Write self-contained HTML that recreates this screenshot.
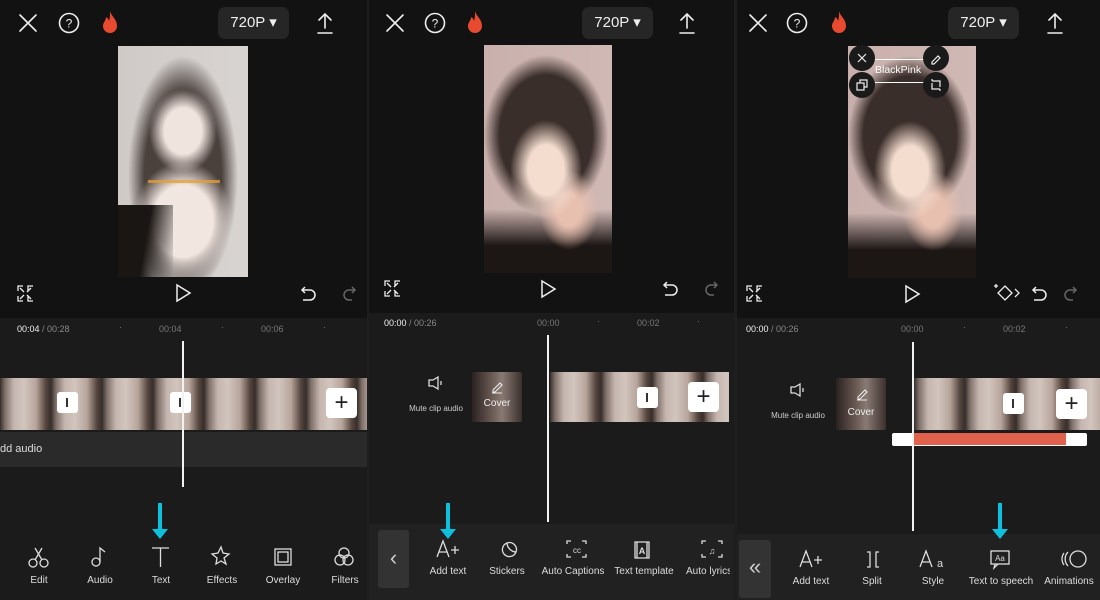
<!DOCTYPE html>
<html><head><meta charset="utf-8"><style>
*{margin:0;padding:0;box-sizing:border-box}
body{width:1100px;height:600px;background:#121212;position:relative;overflow:hidden;font-family:"Liberation Sans",sans-serif;color:#ddd}
.a{position:absolute}
.pill{position:absolute;height:32px;width:71px;background:#262626;border-radius:7px;color:#eee;font-size:15px;line-height:32px;text-align:center}
.tl{position:absolute;background:#1b1b1b}
.tb{position:absolute;background:#212121}
.time{position:absolute;font-size:9px;color:#888}
.time b{color:#eee;font-weight:normal}
.tick{position:absolute;font-size:9px;color:#777}
.ph{position:absolute;width:2px;background:#f2f2f2}
.clip{position:absolute;background:repeating-linear-gradient(90deg,#3a302c 0,#8a7a72 5px,#d8c8c0 14px,#e6d8d0 24px,#c8b4aa 36px,#5a4840 46px,#3a302c 51px)}
.mk{position:absolute;width:21px;height:21px;background:#fff;border-radius:3px}
.mk:after{content:"";position:absolute;left:9px;top:6px;width:2px;height:9px;background:#333}
.plus{position:absolute;width:31px;height:30px;background:#fff;border-radius:4px;color:#222;font-size:24px;line-height:29px;text-align:center}
.lbl{position:absolute;font-size:10px;color:#ddd;white-space:nowrap;transform:translateX(-50%)}
.arrow{position:absolute;width:4px;background:#0cc0de}
.arrow:after{content:"";position:absolute;left:-6px;bottom:-8px;border-left:8px solid transparent;border-right:8px solid transparent;border-top:10px solid #0cc0de}
.mute{position:absolute;font-size:8px;color:#ccc;transform:translateX(-50%);white-space:nowrap}
.cover{position:absolute;background:linear-gradient(90deg,#2a2220,#6a5a54 40%,#8a7a74 60%,#3a302c);border-radius:2px;color:#eee;font-size:10px;text-align:center}
.back{position:absolute;background:#333;border-radius:3px;color:#ccc;text-align:center}
.ph2{position:absolute;background:
 radial-gradient(ellipse 36px 50px at 62px 125px,#f4dccf 50%,rgba(240,210,195,0) 100%),
 radial-gradient(ellipse 30px 40px at 85px 165px,#e8c0b0 40%,rgba(0,0,0,0) 100%),
 linear-gradient(180deg,rgba(0,0,0,0) 72%,#1c1614 88%),
 radial-gradient(ellipse 62px 80px at 62px 90px,#3a2e2a 75%,rgba(0,0,0,0) 100%),
 linear-gradient(90deg,#c9b0ac,#d0b8b4)}
</style></head><body>

<div class="a" style="left:367px;top:0;width:2px;height:600px;background:#1e1e1e"></div>
<div class="a" style="left:734px;top:0;width:3px;height:600px;background:#1e1e1e"></div>

<!-- ============ PANEL 1 ============ -->
<svg class="a" style="left:0;top:0" width="367" height="45">
 <g stroke="#eee" stroke-width="1.6" fill="none" stroke-linecap="round">
  <path d="M20 15l16 16M36 15L20 31"/>
  <circle cx="69" cy="23" r="9.5"/>
  <path d="M325 28V14M319 20l6-6 6 6M318 33h14"/>
 </g>
 <text x="69" y="27.5" font-size="12" fill="#eee" text-anchor="middle" font-family="Liberation Sans">?</text>
 <path d="M110 11c1 5 7 8 7 15a7 7 0 0 1-14 0c0-4 3-5 3-9 2 1 3 3 3 4 1-3 1-6 1-10z" fill="#e84a2f"/>
</svg>
<div class="pill" style="left:218px;top:7px">720P ▾</div>
<div class="a" style="left:118px;top:46px;width:130px;height:231px;background:
 radial-gradient(ellipse 34px 42px at 65px 85px,#f0e4de 55%,rgba(0,0,0,0) 100%),
 radial-gradient(ellipse 50px 60px at 65px 175px,#f2e6e0 60%,rgba(0,0,0,0) 100%),
 radial-gradient(ellipse 55px 120px at 65px 130px,#4a403c 70%,rgba(0,0,0,0) 100%),
 linear-gradient(90deg,#cfcac8,#d8d4d2)"></div>
<div class="a" style="left:118px;top:205px;width:55px;height:72px;background:linear-gradient(100deg,#1a1614 50%,rgba(0,0,0,0) 100%)"></div>
<div class="a" style="left:148px;top:180px;width:72px;height:3px;background:#e8a030;opacity:.75"></div>
<svg class="a" style="left:0;top:278px" width="367" height="30">
 <g stroke="#eee" stroke-width="1.5" fill="none">
  <path d="M18 13v-5h5M33 8h-5v5M18 18v5h5M33 23h-5v-5M20 10l4 4M31 10l-4 4M20 21l4-4M31 21l-4-4" stroke-width="1.3"/>
  <path d="M177 7l13 8-13 8z"/>
  <path d="M305 9l-3 3 3 3M302 12h8a5 5 0 0 1 0 10h-7"/>
  <path d="M352 9l3 3-3 3M355 12h-6a5 5 0 0 0 0 10h3" stroke="#666"/>
 </g>
</svg>
<div class="tl" style="left:0;top:318px;width:367px;height:282px"></div>
<div class="time" style="left:17px;top:324px"><b>00:04</b> / 00:28</div>
<div class="tick" style="left:159px;top:324px">00:04</div>
<div class="tick" style="left:261px;top:324px">00:06</div>
<div class="tick" style="left:119px;top:322px">·</div><div class="tick" style="left:221px;top:322px">·</div><div class="tick" style="left:323px;top:322px">·</div>
<div class="clip" style="left:0;top:378px;width:367px;height:52px;opacity:.9"></div>
<div class="mk" style="left:57px;top:392px"></div>
<div class="mk" style="left:170px;top:392px"></div>
<div class="plus" style="left:326px;top:388px">+</div>
<div class="a" style="left:0;top:432px;width:367px;height:35px;background:#2a2a2a"></div>
<div class="a" style="left:0;top:443px;font-size:11px;color:#ddd">dd audio</div>
<div class="ph" style="left:182px;top:341px;height:146px"></div>
<div class="arrow" style="left:158px;top:503px;height:28px"></div>
<svg class="a" style="left:0;top:540px" width="367" height="36">
 <g stroke="#ddd" stroke-width="1.3" fill="none">
  <circle cx="33" cy="23" r="4"/><circle cx="44" cy="23" r="4"/><path d="M35 20l7-12M42 20l-7-12"/>
  <circle cx="96" cy="22" r="4"/><path d="M100 22V8l5 4"/>
  <path d="M152 8h17M160.5 8v19"/>
  <path d="M221 7l2 6 6 1-5 4 2 6-5-3-5 3 1-6-5-4 6-1z"/>
  <rect x="275" y="9" width="16" height="16"/><rect x="278" y="12" width="10" height="10"/>
  <circle cx="344" cy="13" r="5"/><circle cx="340" cy="20" r="5"/><circle cx="348" cy="20" r="5"/>
 </g>
</svg>
<div class="lbl" style="left:39px;top:575px">Edit</div>
<div class="lbl" style="left:100px;top:575px">Audio</div>
<div class="lbl" style="left:161px;top:575px">Text</div>
<div class="lbl" style="left:222px;top:575px">Effects</div>
<div class="lbl" style="left:283px;top:575px">Overlay</div>
<div class="lbl" style="left:345px;top:575px">Filters</div>

<!-- ============ PANEL 2 ============ -->
<svg class="a" style="left:369px;top:0" width="365" height="45">
 <g stroke="#eee" stroke-width="1.6" fill="none" stroke-linecap="round">
  <path d="M18 15l16 16M34 15L18 31"/>
  <circle cx="66" cy="23" r="9.5"/>
  <path d="M318 28V14M312 20l6-6 6 6M311 33h14"/>
 </g>
 <text x="66" y="27.5" font-size="12" fill="#eee" text-anchor="middle" font-family="Liberation Sans">?</text>
 <path d="M106 11c1 5 7 8 7 15a7 7 0 0 1-14 0c0-4 3-5 3-9 2 1 3 3 3 4 1-3 1-6 1-10z" fill="#e84a2f"/>
</svg>
<div class="pill" style="left:582px;top:7px">720P ▾</div>
<div class="ph2" style="left:484px;top:45px;width:128px;height:228px"></div>
<svg class="a" style="left:369px;top:273px" width="365" height="30">
 <g stroke="#eee" stroke-width="1.5" fill="none">
  <path d="M16 13v-5h5M31 8h-5v5M16 18v5h5M31 23h-5v-5M18 10l4 4M29 10l-4 4M18 21l4-4M29 21l-4-4" stroke-width="1.3"/>
  <path d="M173 8l13 8-13 8z"/>
  <path d="M298 9l-3 3 3 3M295 12h8a5 5 0 0 1 0 10h-7"/>
  <path d="M345 9l3 3-3 3M348 12h-6a5 5 0 0 0 0 10h3" stroke="#666"/>
 </g>
</svg>
<div class="tl" style="left:369px;top:313px;width:365px;height:211px"></div>
<div class="time" style="left:384px;top:318px"><b>00:00</b> / 00:26</div>
<div class="tick" style="left:537px;top:318px">00:00</div>
<div class="tick" style="left:637px;top:318px">00:02</div>
<div class="tick" style="left:597px;top:316px">·</div><div class="tick" style="left:697px;top:316px">·</div>
<svg class="a" style="left:427px;top:375px" width="18" height="16"><path d="M2 5h4l5-3v12l-5-3H2z M14 6v4" stroke="#ddd" stroke-width="1.3" fill="none"/></svg>
<div class="mute" style="left:436px;top:404px">Mute clip audio</div>
<div class="cover" style="left:472px;top:372px;width:50px;height:50px;padding-top:26px">Cover</div>
<svg class="a" style="left:490px;top:380px" width="14" height="14"><path d="M3 10l7-7 2 2-7 7H3zM2 13h10" stroke="#eee" stroke-width="1.1" fill="none"/></svg>
<div class="clip" style="left:550px;top:372px;width:179px;height:50px;opacity:.9"></div>
<div class="mk" style="left:637px;top:387px"></div>
<div class="plus" style="left:688px;top:382px">+</div>
<div class="ph" style="left:547px;top:335px;height:187px"></div>
<div class="tb" style="left:369px;top:524px;width:365px;height:76px"></div>
<div class="back" style="left:378px;top:530px;width:31px;height:58px;line-height:56px;font-size:22px">‹</div>
<div class="arrow" style="left:446px;top:503px;height:28px"></div>
<svg class="a" style="left:369px;top:535px" width="365" height="30">
 <g stroke="#ddd" stroke-width="1.3" fill="none">
  <path d="M68 22l6-16 6 16M70 17h8M82 15h8M86 11v8"/>
  <path d="M138 8a7 7 0 1 0 9 9M138 8a7 7 0 0 1 9 9c-4 0-9-4-9-9z"/>
  <path d="M198 9v-3h4M213 6h4v3M198 19v3h4M213 22h4v-3"/>
  <path d="M266 7h14v16h-14zM268 7v16M278 7v16"/>
  <path d="M333 9v-3h4M349 6h4v3M333 19v3h4M349 22h4v-3"/>
 </g>
 <text x="208" y="18" font-size="8" fill="#ddd" text-anchor="middle" font-family="Liberation Sans">cc</text>
 <text x="273" y="19" font-size="9" fill="#ddd" text-anchor="middle" font-family="Liberation Sans" font-weight="bold">A</text>
 <text x="343" y="19" font-size="9" fill="#ddd" text-anchor="middle" font-family="Liberation Sans">♫</text>
</svg>
<div class="lbl" style="left:448px;top:566px">Add text</div>
<div class="lbl" style="left:507px;top:566px">Stickers</div>
<div class="lbl" style="left:573px;top:566px">Auto Captions</div>
<div class="lbl" style="left:644px;top:566px">Text template</div>
<div class="a" style="left:686px;top:566px;font-size:10px;width:44px;overflow:hidden;white-space:nowrap">Auto lyrics</div>

<!-- ============ PANEL 3 ============ -->
<svg class="a" style="left:737px;top:0" width="363" height="45">
 <g stroke="#eee" stroke-width="1.6" fill="none" stroke-linecap="round">
  <path d="M13 15l16 16M29 15L13 31"/>
  <circle cx="60" cy="23" r="9.5"/>
  <path d="M318 28V14M312 20l6-6 6 6M311 33h14"/>
 </g>
 <text x="60" y="27.5" font-size="12" fill="#eee" text-anchor="middle" font-family="Liberation Sans">?</text>
 <path d="M102 11c1 5 7 8 7 15a7 7 0 0 1-14 0c0-4 3-5 3-9 2 1 3 3 3 4 1-3 1-6 1-10z" fill="#e84a2f"/>
</svg>
<div class="pill" style="left:948px;top:7px">720P ▾</div>
<div class="ph2" style="left:848px;top:46px;width:128px;height:232px"></div>
<div class="a" style="left:875px;top:59px;width:50px;height:1px;background:#fff"></div>
<div class="a" style="left:875px;top:82px;width:50px;height:1px;background:#fff"></div>
<div class="a" style="left:875px;top:64px;font-size:10.5px;color:#fff">BlackPink</div>
<svg class="a" style="left:848px;top:44px" width="110" height="55">
 <g fill="#1a1a1a"><circle cx="14" cy="14" r="13"/><circle cx="88" cy="14" r="13"/><circle cx="14" cy="41" r="13"/><circle cx="88" cy="41" r="13"/></g>
 <g stroke="#eee" stroke-width="1.2" fill="none">
  <path d="M10 10l8 8M18 10l-8 8"/>
  <path d="M84 18l6-6 2 2-6 6h-2z"/>
  <rect x="9" y="39" width="7" height="7"/><path d="M12 39v-3h7v7h-3"/>
  <path d="M84 37h8v6M84 37v-2M92 45h-8v-6M92 45v2"/>
 </g>
</svg>
<svg class="a" style="left:737px;top:278px" width="363" height="30">
 <g stroke="#eee" stroke-width="1.5" fill="none">
  <path d="M10 13v-5h5M25 8h-5v5M10 18v5h5M25 23h-5v-5M12 10l4 4M23 10l-4 4M12 21l4-4M23 21l-4-4" stroke-width="1.3"/>
  <path d="M169 8l13 8-13 8z"/>
  <path d="M268 8l7 7-7 7-7-7zM278 11l4 4-4 4M259 6v4M257 8h4" stroke-width="1.3"/>
  <path d="M299 9l-3 3 3 3M296 12h8a5 5 0 0 1 0 10h-7"/>
  <path d="M336 9l3 3-3 3M339 12h-6a5 5 0 0 0 0 10h3" stroke="#666"/>
 </g>
</svg>
<div class="tl" style="left:737px;top:318px;width:363px;height:216px"></div>
<div class="time" style="left:746px;top:324px"><b>00:00</b> / 00:26</div>
<div class="tick" style="left:901px;top:324px">00:00</div>
<div class="tick" style="left:1003px;top:324px">00:02</div>
<div class="tick" style="left:963px;top:322px">·</div><div class="tick" style="left:1065px;top:322px">·</div>
<svg class="a" style="left:789px;top:382px" width="18" height="16"><path d="M2 5h4l5-3v12l-5-3H2z M14 6v4" stroke="#ddd" stroke-width="1.3" fill="none"/></svg>
<div class="mute" style="left:798px;top:411px">Mute clip audio</div>
<div class="cover" style="left:836px;top:378px;width:50px;height:52px;padding-top:29px">Cover</div>
<svg class="a" style="left:855px;top:387px" width="14" height="14"><path d="M3 10l7-7 2 2-7 7H3zM2 13h10" stroke="#eee" stroke-width="1.1" fill="none"/></svg>
<div class="clip" style="left:914px;top:378px;width:186px;height:52px;opacity:.9"></div>
<div class="mk" style="left:1003px;top:393px"></div>
<div class="plus" style="left:1056px;top:389px">+</div>
<div class="a" style="left:892px;top:433px;width:195px;height:13px;background:#fff;border-radius:2px"></div>
<div class="a" style="left:914px;top:433px;width:152px;height:12px;background:#e0624d"></div>
<div class="ph" style="left:912px;top:342px;height:189px"></div>
<div class="tb" style="left:737px;top:534px;width:363px;height:66px"></div>
<div class="back" style="left:739px;top:540px;width:32px;height:58px;line-height:54px;font-size:22px">«</div>
<div class="arrow" style="left:998px;top:503px;height:28px"></div>
<svg class="a" style="left:737px;top:545px" width="363" height="30">
 <g stroke="#ddd" stroke-width="1.3" fill="none">
  <path d="M63 22l6-16 6 16M65 17h8M77 15h8M81 11v8"/>
  <path d="M130 7h3v15h-3M142 7h-3v15h3"/>
  <path d="M183 22l6-16 6 16M185 17h8"/>
  <rect x="254" y="6" width="18" height="13"/><path d="M258 19l-1 4 4-4"/>
  <circle cx="341" cy="14" r="8"/><path d="M331 7a10 10 0 0 0 0 14M327 8a10 10 0 0 0 0 12"/>
 </g>
 <text x="203" y="22" font-size="11" fill="#ddd" text-anchor="middle" font-family="Liberation Sans">a</text>
 <text x="263" y="16" font-size="8" fill="#ddd" text-anchor="middle" font-family="Liberation Sans">Aa</text>
</svg>
<div class="lbl" style="left:811px;top:576px">Add text</div>
<div class="lbl" style="left:872px;top:576px">Split</div>
<div class="lbl" style="left:933px;top:576px">Style</div>
<div class="lbl" style="left:1001px;top:576px">Text to speech</div>
<div class="lbl" style="left:1069px;top:576px">Animations</div>

</body></html>
